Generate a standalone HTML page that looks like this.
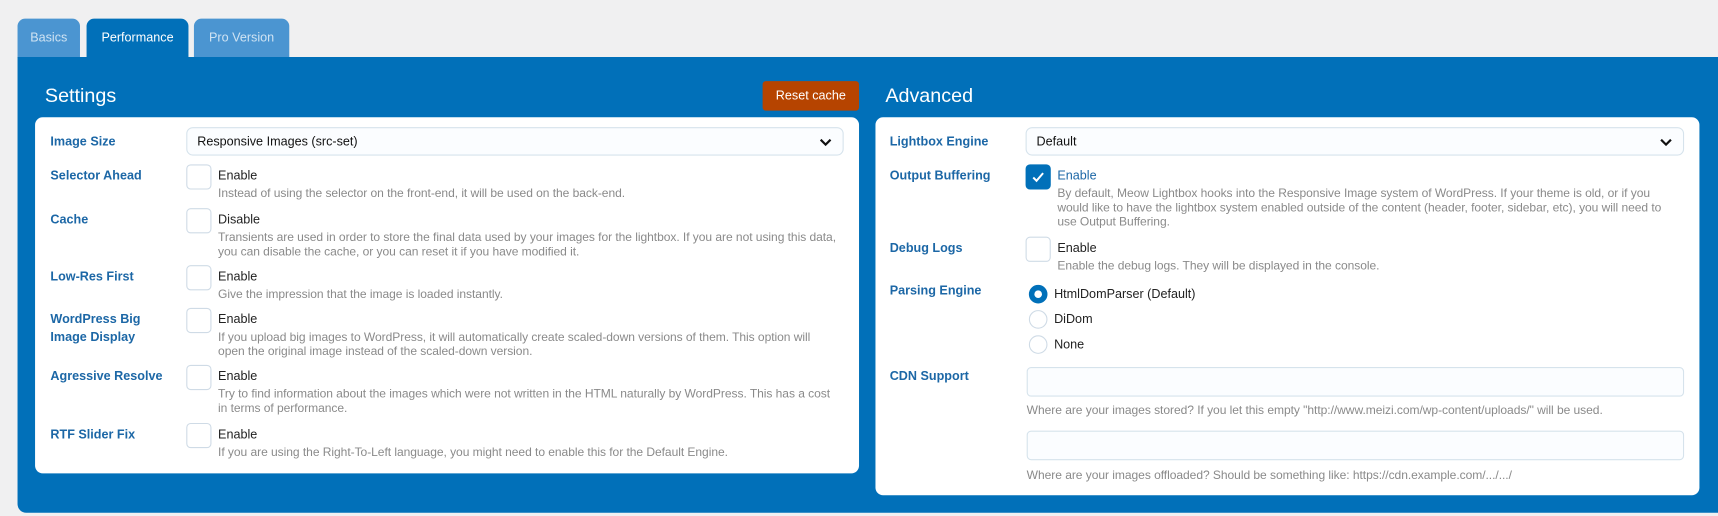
<!DOCTYPE html>
<html><head><meta charset="utf-8"><style>
html,body{margin:0;padding:0;background:#f0f0f1;width:1718px;height:516px;overflow:hidden}
#w{position:absolute;left:0;top:0;width:1568px;height:471px;transform:scale(1.0957);transform-origin:0 0;font-family:"Liberation Sans",sans-serif}
.a{position:absolute}
.tab{position:absolute;top:17px;height:36px;border-radius:7px 7px 0 0;background:#4b95d1;color:#cfe3f3;font-size:11.5px;line-height:36px;text-align:center}
.blue{left:16px;top:52px;width:1560px;height:416px;background:#0170b9;border-radius:0 0 0 8px}
.h{color:#fff;font-size:18px}
.card{background:#fff;border-radius:7px}
.lb{position:absolute;color:#1c67a6;font-size:11.5px;font-weight:bold;line-height:16px;margin-top:1px}
.cb{position:absolute;width:21px;height:21px;border:1px solid #cfdbe6;border-radius:4px;background:#fff}
.en{position:absolute;font-size:11.5px;color:#222;margin-top:2px}
.d{position:absolute;font-size:11px;color:#8a8a8a;line-height:13.2px;white-space:nowrap;letter-spacing:-0.05px;margin-top:1px}
.sel{position:absolute;height:26px;border:1px solid #d6e3ec;border-radius:6px;background:#fbfdff;font-size:11.5px;line-height:26px;box-sizing:border-box;padding-left:9px;color:#111}
.sel svg{position:absolute;right:10px;top:9px}
.rd{position:absolute;width:15px;height:15px;border:1px solid #cfdbe6;border-radius:50%;background:#fff;left:939px}
.rt{position:absolute;left:962px;font-size:11.5px;color:#222;margin-top:1px}
.inp{position:absolute;left:937px;width:600px;height:27px;border:1px solid #d6e3ec;border-radius:4px;background:#fbfdff;box-sizing:border-box}
</style></head><body><div id="w">
<div class="tab" style="left:16px;width:57px">Basics</div>
<div class="tab" style="left:79px;width:93px;background:#0170b9;color:#fff">Performance</div>
<div class="tab" style="left:177px;width:87px">Pro Version</div>
<div class="a blue"></div>
<div class="a h" style="left:41px;top:77px">Settings</div>
<div class="a" style="left:696px;top:74px;width:88px;height:27px;background:#b64400;border-radius:3px;color:#fff;font-size:11.5px;line-height:28px;text-align:center">Reset cache</div>
<div class="a h" style="left:808px;top:77px">Advanced</div>
<div class="a card" style="left:32px;top:107px;width:752px;height:325px"></div>
<div class="a card" style="left:799px;top:107px;width:752px;height:345px"></div>

<div class="lb" style="left:46px;top:121px">Image Size</div>
<div class="sel" style="left:170px;top:116px;width:600px">Responsive Images (src-set)<svg width="11" height="8" viewBox="0 0 11 8"><path d="M1 1.5l4.5 4.5 4.5-4.5" fill="none" stroke="#111" stroke-width="2"/></svg></div>

<div class="lb" style="left:46px;top:152px">Selector Ahead</div>
<div class="cb" style="left:170px;top:150px"></div><div class="en" style="left:199px;top:153px">Enable</div>
<div class="d" style="left:199px;top:170px">Instead of using the selector on the front-end, it will be used on the back-end.</div>

<div class="lb" style="left:46px;top:192px">Cache</div>
<div class="cb" style="left:170px;top:190px"></div><div class="en" style="left:199px;top:193px">Disable</div>
<div class="d" style="left:199px;top:210px">Transients are used in order to store the final data used by your images for the lightbox. If you are not using this data,<br>you can disable the cache, or you can reset it if you have modified it.</div>

<div class="lb" style="left:46px;top:244px">Low-Res First</div>
<div class="cb" style="left:170px;top:242px"></div><div class="en" style="left:199px;top:245px">Enable</div>
<div class="d" style="left:199px;top:262px">Give the impression that the image is loaded instantly.</div>

<div class="lb" style="left:46px;top:283px">WordPress Big<br>Image Display</div>
<div class="cb" style="left:170px;top:281px"></div><div class="en" style="left:199px;top:284px">Enable</div>
<div class="d" style="left:199px;top:301px">If you upload big images to WordPress, it will automatically create scaled-down versions of them. This option will<br>open the original image instead of the scaled-down version.</div>

<div class="lb" style="left:46px;top:335px">Agressive Resolve</div>
<div class="cb" style="left:170px;top:333px"></div><div class="en" style="left:199px;top:336px">Enable</div>
<div class="d" style="left:199px;top:353px">Try to find information about the images which were not written in the HTML naturally by WordPress. This has a cost<br>in terms of performance.</div>

<div class="lb" style="left:46px;top:388px">RTF Slider Fix</div>
<div class="cb" style="left:170px;top:386px"></div><div class="en" style="left:199px;top:389px">Enable</div>
<div class="d" style="left:199px;top:406px">If you are using the Right-To-Left language, you might need to enable this for the Default Engine.</div>

<div class="lb" style="left:812px;top:121px">Lightbox Engine</div>
<div class="sel" style="left:936px;top:116px;width:601px">Default<svg width="11" height="8" viewBox="0 0 11 8"><path d="M1 1.5l4.5 4.5 4.5-4.5" fill="none" stroke="#111" stroke-width="2"/></svg></div>

<div class="lb" style="left:812px;top:152px">Output Buffering</div>
<div class="cb" style="left:936px;top:150px;background:#0170b9;border-color:#0170b9"><svg width="21" height="21" viewBox="0 0 21 21"><path d="M6 11l3 3 6-7" fill="none" stroke="#fff" stroke-width="1.8"/></svg></div>
<div class="en" style="left:965px;top:153px;color:#1c67a6">Enable</div>
<div class="d" style="left:965px;top:170px">By default, Meow Lightbox hooks into the Responsive Image system of WordPress. If your theme is old, or if you<br>would like to have the lightbox system enabled outside of the content (header, footer, sidebar, etc), you will need to<br>use Output Buffering.</div>

<div class="lb" style="left:812px;top:218px">Debug Logs</div>
<div class="cb" style="left:936px;top:216px"></div><div class="en" style="left:965px;top:219px">Enable</div>
<div class="d" style="left:965px;top:236px">Enable the debug logs. They will be displayed in the console.</div>

<div class="lb" style="left:812px;top:257px">Parsing Engine</div>
<div class="rd" style="top:260px;border:5px solid #0170b9;width:7px;height:7px"></div><div class="rt" style="top:262px">HtmlDomParser (Default)</div>
<div class="rd" style="top:283px"></div><div class="rt" style="top:285px">DiDom</div>
<div class="rd" style="top:306px"></div><div class="rt" style="top:308px">None</div>

<div class="lb" style="left:812px;top:335px">CDN Support</div>
<div class="inp" style="top:335px"></div>
<div class="d" style="left:937px;top:368px">Where are your images stored? If you let this empty "http://www.meizi.com/wp-content/uploads/" will be used.</div>
<div class="inp" style="top:393px"></div>
<div class="d" style="left:937px;top:427px">Where are your images offloaded? Should be something like: https://cdn.example.com/.../.../</div>
</div></body></html>
